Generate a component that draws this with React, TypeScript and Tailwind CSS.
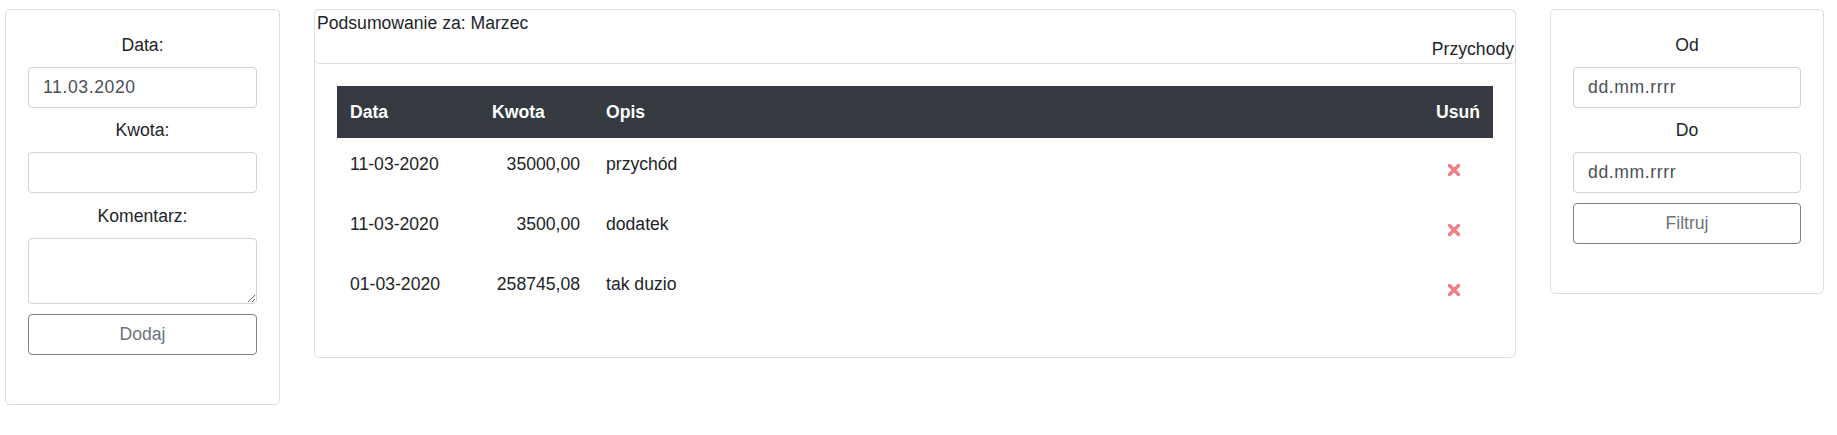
const font = { fontFamily: '"Liberation Sans", Arial, sans-serif' };

const rows = [
	{ date: '11-03-2020', amount: '35000,00', desc: 'przychód' },
	{ date: '11-03-2020', amount: '3500,00', desc: 'dodatek' },
	{ date: '01-03-2020', amount: '258745,08', desc: 'tak duzio' },
];

const Cross = () => (
	<svg width="14" height="14" viewBox="0 0 14 14" className="block">
		<path d="M2.5 2.5 L11.5 11.5 M11.5 2.5 L2.5 11.5" stroke="#ef7f87" strokeWidth="3.4" strokeLinecap="round" />
	</svg>
);

const Label = ({ children }: { children: string }) => (
	<div className="text-center leading-[26px] mb-[9px]">{children}</div>
);

const Field = ({ value }: { value?: string }) => (
	<input
		type="text"
		readOnly
		value={value ?? ''}
		className="block w-full h-[41px] px-[14px] border border-[#ced4da] rounded-[4px] text-[#495057] tracking-[0.6px] outline-none bg-white"
	/>
);

const OutlineButton = ({ children }: { children: string }) => (
	<button
		type="button"
		className="block w-full h-[41px] border border-[#7a838b] rounded-[4px] text-[#6c757d] bg-white"
	>
		{children}
	</button>
);

const AddForm = () => (
	<div className="w-[275px] border border-[#dfdfdf] rounded-[5px] pt-[22px] pb-[49px] pl-[22px] pr-[22px]">
		<Label>Data:</Label>
		<Field value="11.03.2020" />
		<div className="h-[9px]" />
		<Label>Kwota:</Label>
		<Field />
		<div className="h-[10px]" />
		<Label>Komentarz:</Label>
		<textarea className="block w-full h-[66px] border border-[#ced4da] rounded-[4px] outline-none resize-y" />
		<div className="h-[10px]" />
		<OutlineButton>Dodaj</OutlineButton>
	</div>
);

const Summary = () => (
	<div className="w-[1202px] border border-[#dfdfdf] rounded-[5px]">
		<div className="border border-[#dfdfdf] rounded-[5px] -m-px mb-0 h-[55px] leading-[26px] pl-[2px] pr-[1px]">
			<div>Podsumowanie za: Marzec</div>
			<div className="text-right">Przychody</div>
		</div>
		<div className="px-[22px] pt-[22px] pb-[39px]">
			<table className="w-full border-collapse">
				<thead>
					<tr className="bg-[#343a40] text-white font-bold h-[52px]">
						<th className="w-[142px] text-left px-[13px]">Data</th>
						<th className="w-[114px] text-left px-[13px]">Kwota</th>
						<th className="text-left px-[13px]">Opis</th>
						<th className="w-[90px] text-right px-[13px]">Usuń</th>
					</tr>
				</thead>
				<tbody>
					{rows.map((r) => (
						<tr key={r.desc} className="h-[60px] align-top">
							<td className="px-[13px] pt-[13px]">{r.date}</td>
							<td className="px-[13px] pt-[13px] text-right">{r.amount}</td>
							<td className="px-[13px] pt-[13px]">{r.desc}</td>
							<td className="pt-[13px] pr-[32px]">
								<div className="flex justify-end pt-[12px]">
									<Cross />
								</div>
							</td>
						</tr>
					))}
				</tbody>
			</table>
		</div>
	</div>
);

const FilterForm = () => (
	<div className="w-[274px] border border-[#dfdfdf] rounded-[5px] pt-[22px] pb-[49px] pl-[22px] pr-[22px]">
		<Label>Od</Label>
		<Field value="dd.mm.rrrr" />
		<div className="h-[9px]" />
		<Label>Do</Label>
		<Field value="dd.mm.rrrr" />
		<div className="h-[10px]" />
		<OutlineButton>Filtruj</OutlineButton>
	</div>
);

export default function App() {
	return (
		<div style={font} className="w-[1837px] h-[435px] bg-white text-[#212529] text-[17.6px] leading-[26.4px]">
			<div className="flex items-start gap-[34px] pl-[5px] pt-[9px]">
				<AddForm />
				<Summary />
				<FilterForm />
			</div>
		</div>
	);
}
